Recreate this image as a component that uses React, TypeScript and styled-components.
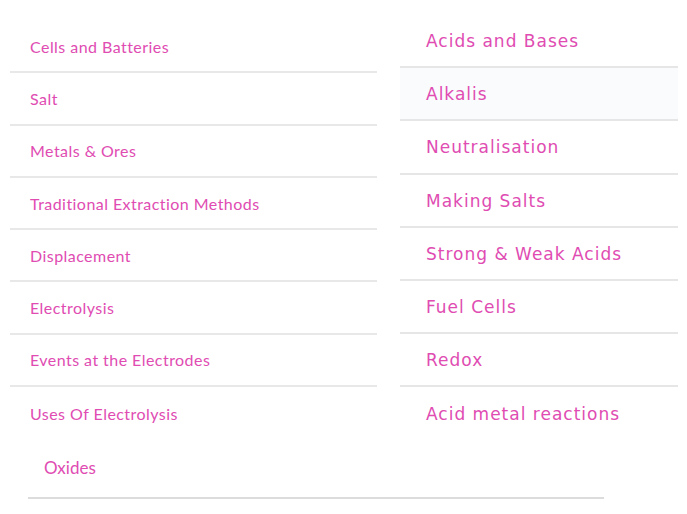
import React from "react";
import styled, { createGlobalStyle } from "styled-components";

const Global = createGlobalStyle`
  html, body { margin: 0; padding: 0; background: #ffffff; }
  body { width: 687px; height: 514px; overflow: hidden; }
`;

const Page = styled.div`
  width: 687px;
  height: 514px;
  display: flex;
  flex-direction: column;
`;

const Columns = styled.div`
  display: flex;
  align-items: flex-start;
  gap: 23px;
  padding-left: 10px;
`;

const LeftList = styled.ul`
  list-style: none;
  margin: 0;
  padding: 21px 0 0 0;
  width: 367px;
`;

const RightList = styled.ul`
  list-style: none;
  margin: 0;
  padding: 15px 0 0 0;
  width: 278px;
`;

const LeftItem = styled.li<{ $last?: boolean }>`
  height: 52.3px;
  box-sizing: border-box;
  display: flex;
  align-items: center;
  padding: 0 0 0 20px;
  border-bottom: ${(p) => (p.$last ? "none" : "2px solid #e8e8e8")};
  font-family: "Lato", "Liberation Sans", sans-serif;
  font-size: 16px;
  letter-spacing: 0.45px;
  color: #e04cb2;
`;

const RightItem = styled.li<{ $last?: boolean; $active?: boolean }>`
  height: 53.2px;
  box-sizing: border-box;
  display: flex;
  align-items: center;
  padding: 1px 0 0 26px;
  background: ${(p) => (p.$active ? "#fafbfd" : "transparent")};
  border-bottom: ${(p) => (p.$last ? "none" : "2px solid #e6e6e6")};
  font-family: "DejaVu Sans", "Liberation Sans", sans-serif;
  font-size: 17px;
  letter-spacing: 1px;
  color: #e04cb2;
`;

const Footer = styled.div`
  margin-left: 28px;
  width: 576px;
  height: 58px;
  box-sizing: border-box;
  display: flex;
  align-items: center;
  padding: 0 0 3px 16px;
  border-bottom: 2px solid #dcdcdc;
  font-family: "Lato", "Liberation Sans", sans-serif;
  font-size: 17px;
  color: #e04cb2;
`;

const left = [
  "Cells and Batteries",
  "Salt",
  "Metals & Ores",
  "Traditional Extraction Methods",
  "Displacement",
  "Electrolysis",
  "Events at the Electrodes",
  "Uses Of Electrolysis",
];

const right = [
  "Acids and Bases",
  "Alkalis",
  "Neutralisation",
  "Making Salts",
  "Strong & Weak Acids",
  "Fuel Cells",
  "Redox",
  "Acid metal reactions",
];

export default function App() {
  return (
    <Page>
      <Global />
      <Columns>
        <LeftList>
          {left.map((t, i) => (
            <LeftItem key={t} $last={i === left.length - 1}>
              {t}
            </LeftItem>
          ))}
        </LeftList>
        <RightList>
          {right.map((t, i) => (
            <RightItem key={t} $active={i === 1} $last={i === right.length - 1}>
              {t}
            </RightItem>
          ))}
        </RightList>
      </Columns>
      <Footer>Oxides</Footer>
    </Page>
  );
}
